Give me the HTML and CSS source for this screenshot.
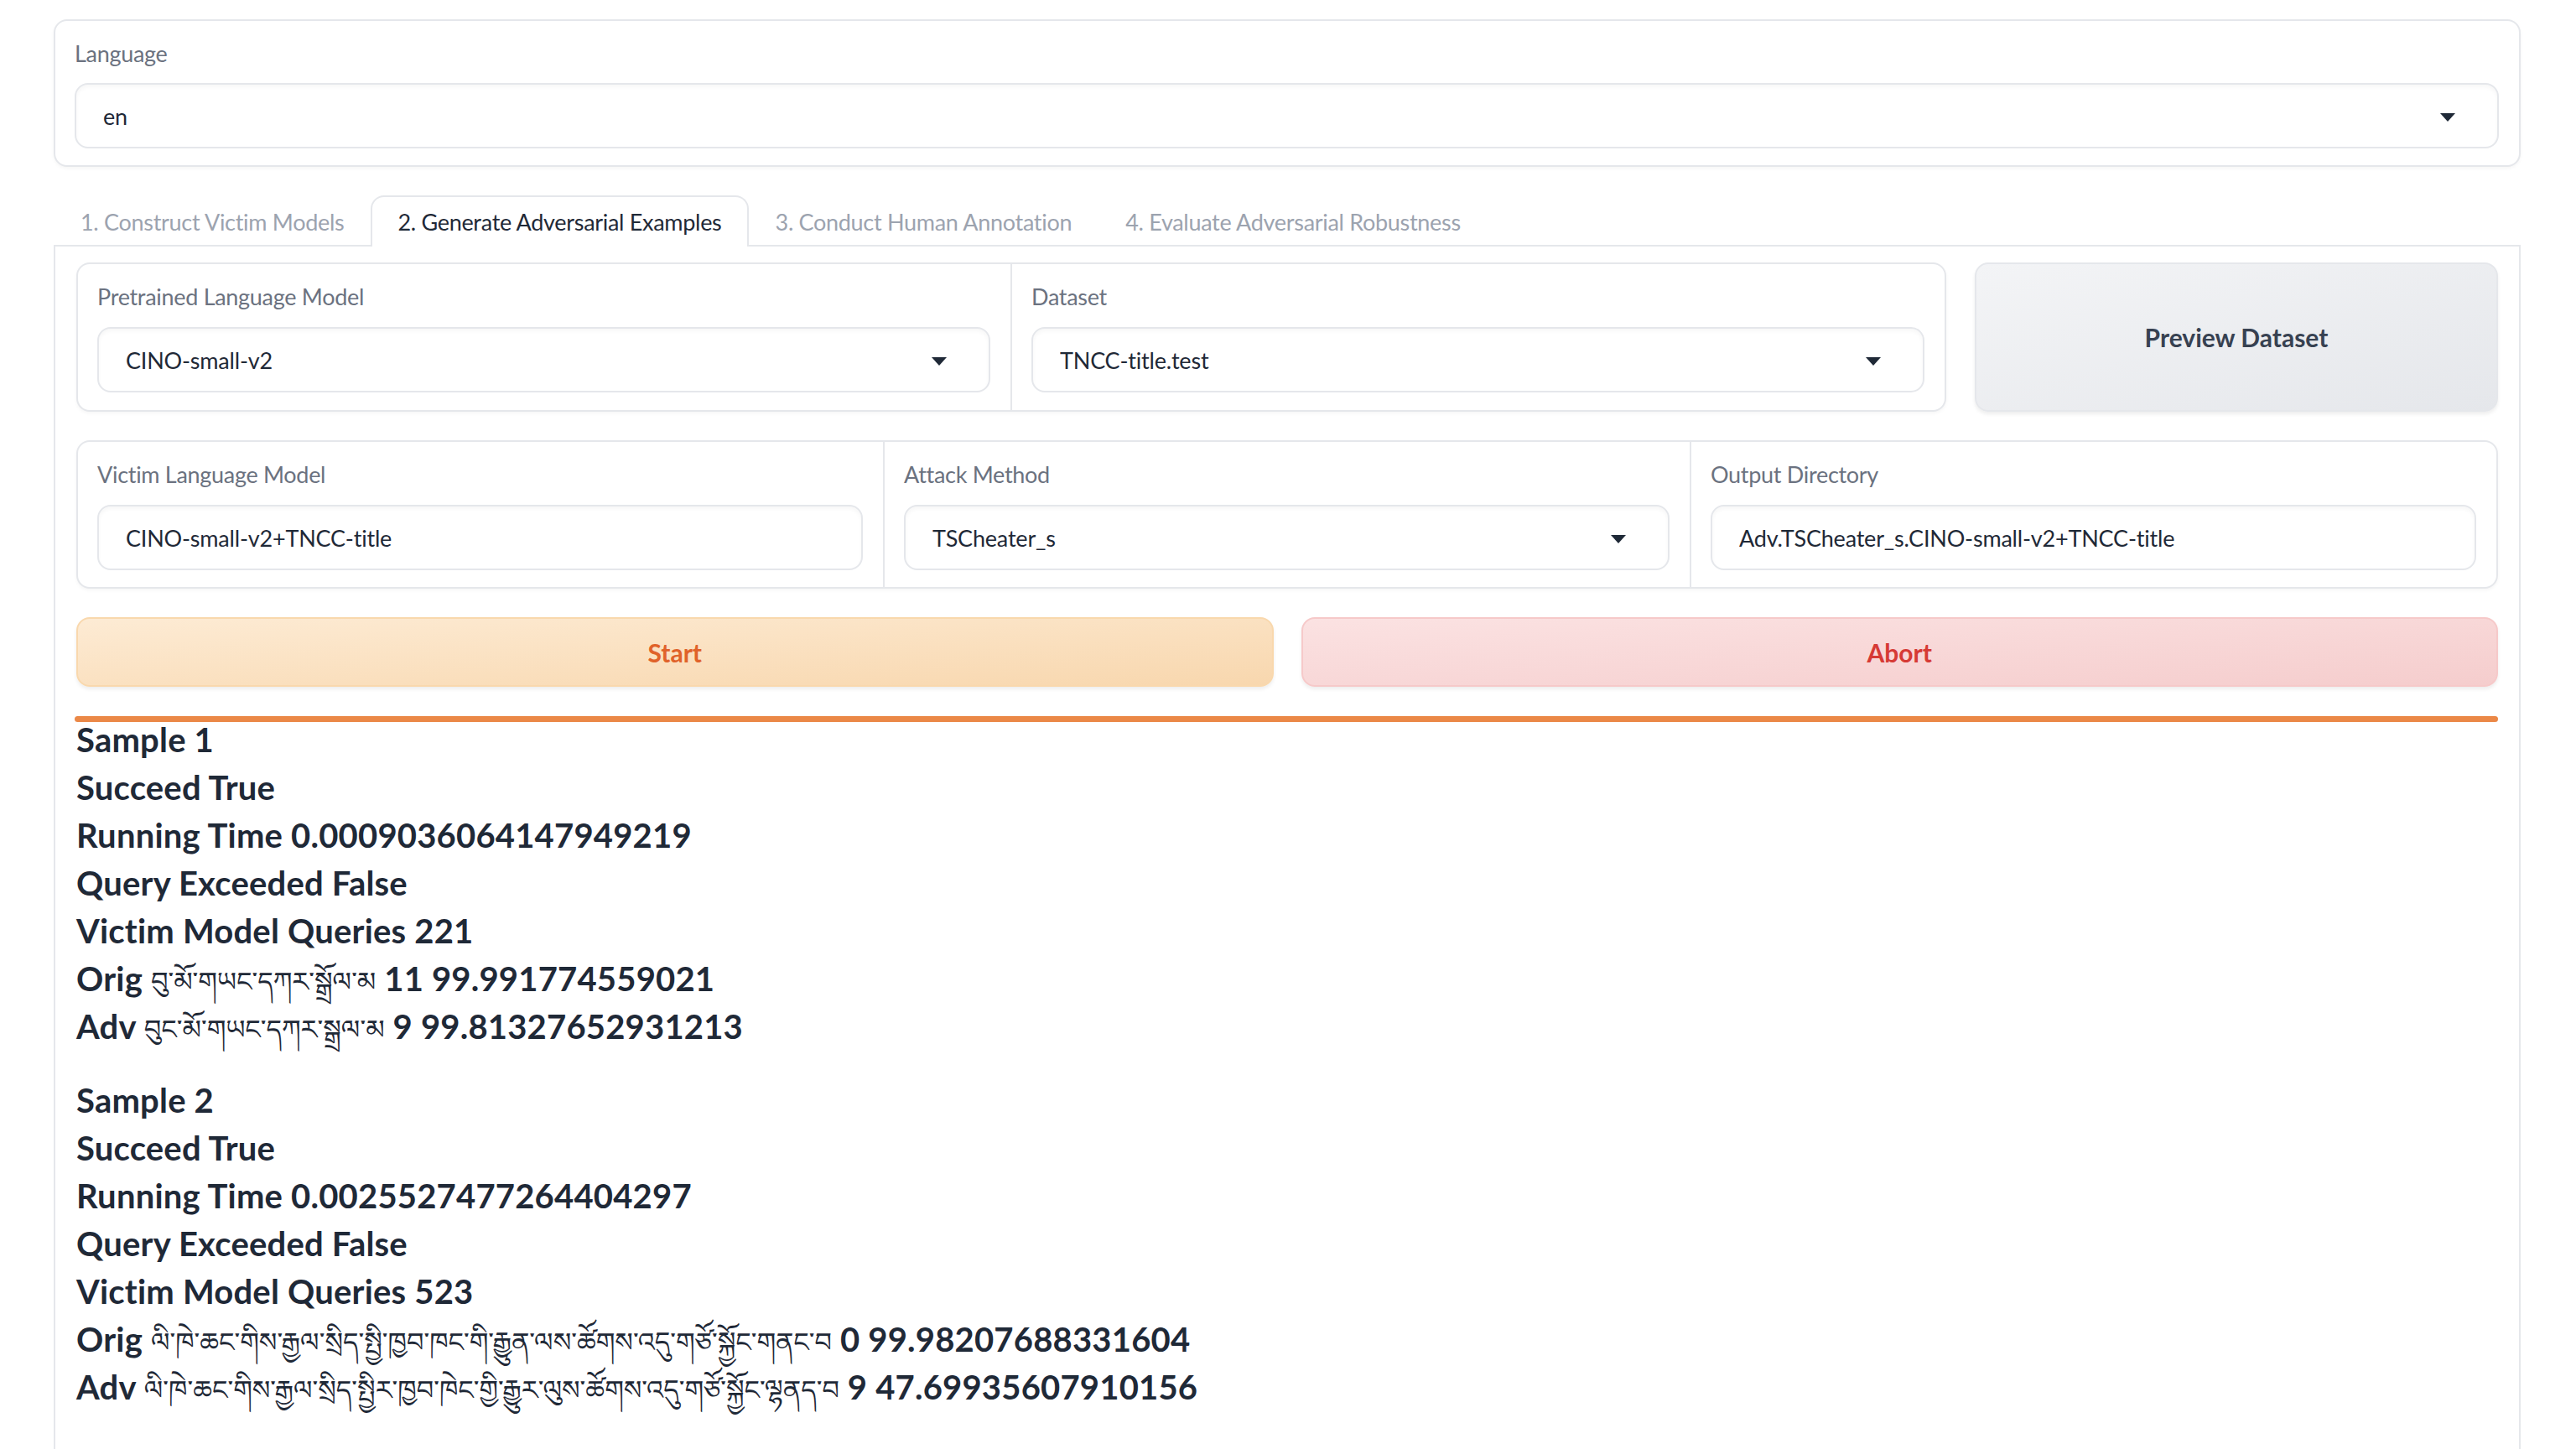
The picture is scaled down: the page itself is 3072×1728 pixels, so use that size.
FILE: index.html
```html
<!DOCTYPE html>
<html lang="en">
<head>
<meta charset="utf-8">
<title>Adversarial Attack Demo</title>
<link rel="stylesheet" href="styles.css">
</head>
<body>
<div class="app">
  <div class="block lang-block">
    <div class="label">Language</div>
    <div class="input select">
      <span class="value">en</span>
      <svg class="caret" width="18" height="10" viewBox="0 0 18 10"><path d="M0 0 H18 L9 10 Z" fill="#1f2937"/></svg>
    </div>
  </div>

  <div class="tabs">
    <div class="tab">1. Construct Victim Models</div>
    <div class="tab active">2. Generate Adversarial Examples</div>
    <div class="tab">3. Conduct Human Annotation</div>
    <div class="tab">4. Evaluate Adversarial Robustness</div>
  </div>

  <div class="panel">
    <div class="row">
      <div class="form">
        <div class="field">
          <div class="label">Pretrained Language Model</div>
          <div class="input select">
            <span class="value">CINO-small-v2</span>
            <svg class="caret" width="18" height="10" viewBox="0 0 18 10"><path d="M0 0 H18 L9 10 Z" fill="#1f2937"/></svg>
          </div>
        </div>
        <div class="field">
          <div class="label">Dataset</div>
          <div class="input select">
            <span class="value">TNCC-title.test</span>
            <svg class="caret" width="18" height="10" viewBox="0 0 18 10"><path d="M0 0 H18 L9 10 Z" fill="#1f2937"/></svg>
          </div>
        </div>
      </div>
      <button class="btn btn-secondary preview">Preview Dataset</button>
    </div>

    <div class="row">
      <div class="form">
        <div class="field">
          <div class="label">Victim Language Model</div>
          <div class="input"><span class="value">CINO-small-v2+TNCC-title</span></div>
        </div>
        <div class="field">
          <div class="label">Attack Method</div>
          <div class="input select">
            <span class="value">TSCheater_s</span>
            <svg class="caret" width="18" height="10" viewBox="0 0 18 10"><path d="M0 0 H18 L9 10 Z" fill="#1f2937"/></svg>
          </div>
        </div>
        <div class="field">
          <div class="label">Output Directory</div>
          <div class="input"><span class="value">Adv.TSCheater_s.CINO-small-v2+TNCC-title</span></div>
        </div>
      </div>
    </div>

    <div class="row buttons">
      <button class="btn btn-primary">Start</button>
      <button class="btn btn-stop">Abort</button>
    </div>

    <div class="output">
      <div class="progress"></div>
      <div class="sample">
        <p>Sample 1</p>
        <p>Succeed True</p>
        <p>Running Time 0.0009036064147949219</p>
        <p>Query Exceeded False</p>
        <p>Victim Model Queries 221</p>
        <p>Orig <span class="bo">བུ་མོ་གཡང་དཀར་སྒྲོལ་མ</span> 11 99.991774559021</p>
        <p>Adv <span class="bo">བུང་མོ་གཡང་དཀར་སྒྲལ་མ</span> 9 99.81327652931213</p>
      </div>
      <div class="sample">
        <p>Sample 2</p>
        <p>Succeed True</p>
        <p>Running Time 0.0025527477264404297</p>
        <p>Query Exceeded False</p>
        <p>Victim Model Queries 523</p>
        <p>Orig <span class="bo">ལི་ཁེ་ཆང་གིས་རྒྱལ་སྲིད་སྤྱི་ཁྱབ་ཁང་གི་རྒྱུན་ལས་ཚོགས་འདུ་གཙོ་སྐྱོང་གནང་བ</span> 0 99.98207688331604</p>
        <p>Adv <span class="bo">ལི་ཁེ་ཆང་གིས་རྒྱལ་སྲིད་སྤྱིར་ཁྱབ་ཁེང་གྱི་རྒྱུར་ལུས་ཚོགས་འདུ་གཙོ་སྐྱོང་ལྷནད་བ</span> 9 47.69935607910156</p>
      </div>
    </div>
  </div>
</div>
</body>
</html>
```

FILE: styles.css
```css
* { box-sizing: border-box; }

html, body {
  margin: 0;
  padding: 0;
  background: #ffffff;
}

body {
  font-family: Lato, "Noto Sans", "Liberation Sans", sans-serif;
  font-size: 28px;
  color: #1f2937;
}

.app {
  width: 2942px;
  margin-left: 64px;
  padding-top: 23px;
}

.block {
  border: 2px solid #e5e7eb;
  border-radius: 16px;
  background: #fff;
  box-shadow: 0 2px 4px rgba(0, 0, 0, 0.04);
}

.lang-block {
  padding: 19px 24px 20px 23px;
}

.lang-block .label {
  margin-bottom: 15px;
}

.label {
  height: 40px;
  line-height: 40px;
  color: #6b7280;
  font-size: 27px;
  letter-spacing: -0.3px;
}

.input {
  height: 78px;
  border: 2px solid #e5e7eb;
  border-radius: 16px;
  background: #fff;
  box-shadow: inset 0 3px 5px rgba(0, 0, 0, 0.035);
  display: flex;
  align-items: center;
  padding: 0 50px 0 32px;
  font-size: 27px;
  letter-spacing: -0.2px;
  color: #1f2937;
}

.input .value {
  flex: 1;
  white-space: nowrap;
  overflow: hidden;
}

.caret {
  flex: none;
  margin-top: 4px;
}

/* Tabs */
.tabs {
  margin-top: 34px;
  height: 61px;
  display: flex;
  border-bottom: 2px solid #e5e7eb;
}

.tab {
  height: 61px;
  margin-bottom: -2px;
  padding: 0 30px;
  border: 2px solid transparent;
  border-bottom: none;
  display: flex;
  align-items: center;
  color: #9ca3af;
  font-size: 27px;
  letter-spacing: -0.3px;
  white-space: nowrap;
}

.tab.active {
  border-color: #e5e7eb;
  border-radius: 16px 16px 0 0;
  background: #fff;
  color: #1f2937;
}

/* Panel */
.panel {
  border: 2px solid #e5e7eb;
  border-top: none;
  padding: 19px 25px 80px;
  min-height: 1500px;
}

.row {
  display: flex;
  gap: 34px;
  margin-bottom: 34px;
}

.form {
  flex: 1;
  display: flex;
  border: 2px solid #e5e7eb;
  border-radius: 16px;
  background: #fff;
  box-shadow: 0 2px 4px rgba(0, 0, 0, 0.04);
  overflow: hidden;
}

.field {
  flex: 1 1 0;
  padding: 19px 24px 20px 23px;
  min-width: 0;
}

.field + .field {
  border-left: 2px solid #e5e7eb;
}

.field .label {
  margin-bottom: 16px;
}

.btn {
  font-family: Lato, "Noto Sans", "Liberation Sans", sans-serif;
  font-size: 30px;
  font-weight: 700;
  border-radius: 16px;
  border: 2px solid;
  cursor: pointer;
  box-shadow: 0 3px 4px rgba(0, 0, 0, 0.07);
}

.preview {
  flex: 0 0 624px;
  height: 178px;
  color: #374151;
  border-color: #e5e7eb;
  background: linear-gradient(to bottom right, #f3f4f6, #e5e7eb);
}

.buttons {
  gap: 33px;
  margin-bottom: 35px;
}

.buttons .btn {
  flex: 1 1 0;
  height: 83px;
}

.btn-primary {
  color: #e0622a;
  border-color: #f9d8ad;
  background: linear-gradient(to bottom right, #fdebd4, #f8d7ae);
}

.btn-stop {
  color: #d63a35;
  border-color: #f6c9c9;
  background: linear-gradient(to bottom right, #fbe2e2, #f5cdcd);
}

/* Output */
.output {
  position: relative;
}

.progress {
  position: absolute;
  top: 0;
  left: -2px;
  right: 0;
  height: 7px;
  border-radius: 4px;
  background: #eb8847;
}

.sample {
  margin-bottom: 31px;
}

.sample p {
  margin: 0;
  height: 57px;
  font-size: 40px;
  line-height: 57px;
  font-weight: 700;
  color: #1f2937;
  white-space: nowrap;
  letter-spacing: 0.2px;
}

.bo {
  font-family: "Noto Sans Tibetan", "Noto Serif Tibetan", "Jomolhari", "Tibetan Machine Uni", "Microsoft Himalaya", Lato, sans-serif;
  font-size: 32px;
  font-weight: 400;
  line-height: 0;
  letter-spacing: 0;
}
```
